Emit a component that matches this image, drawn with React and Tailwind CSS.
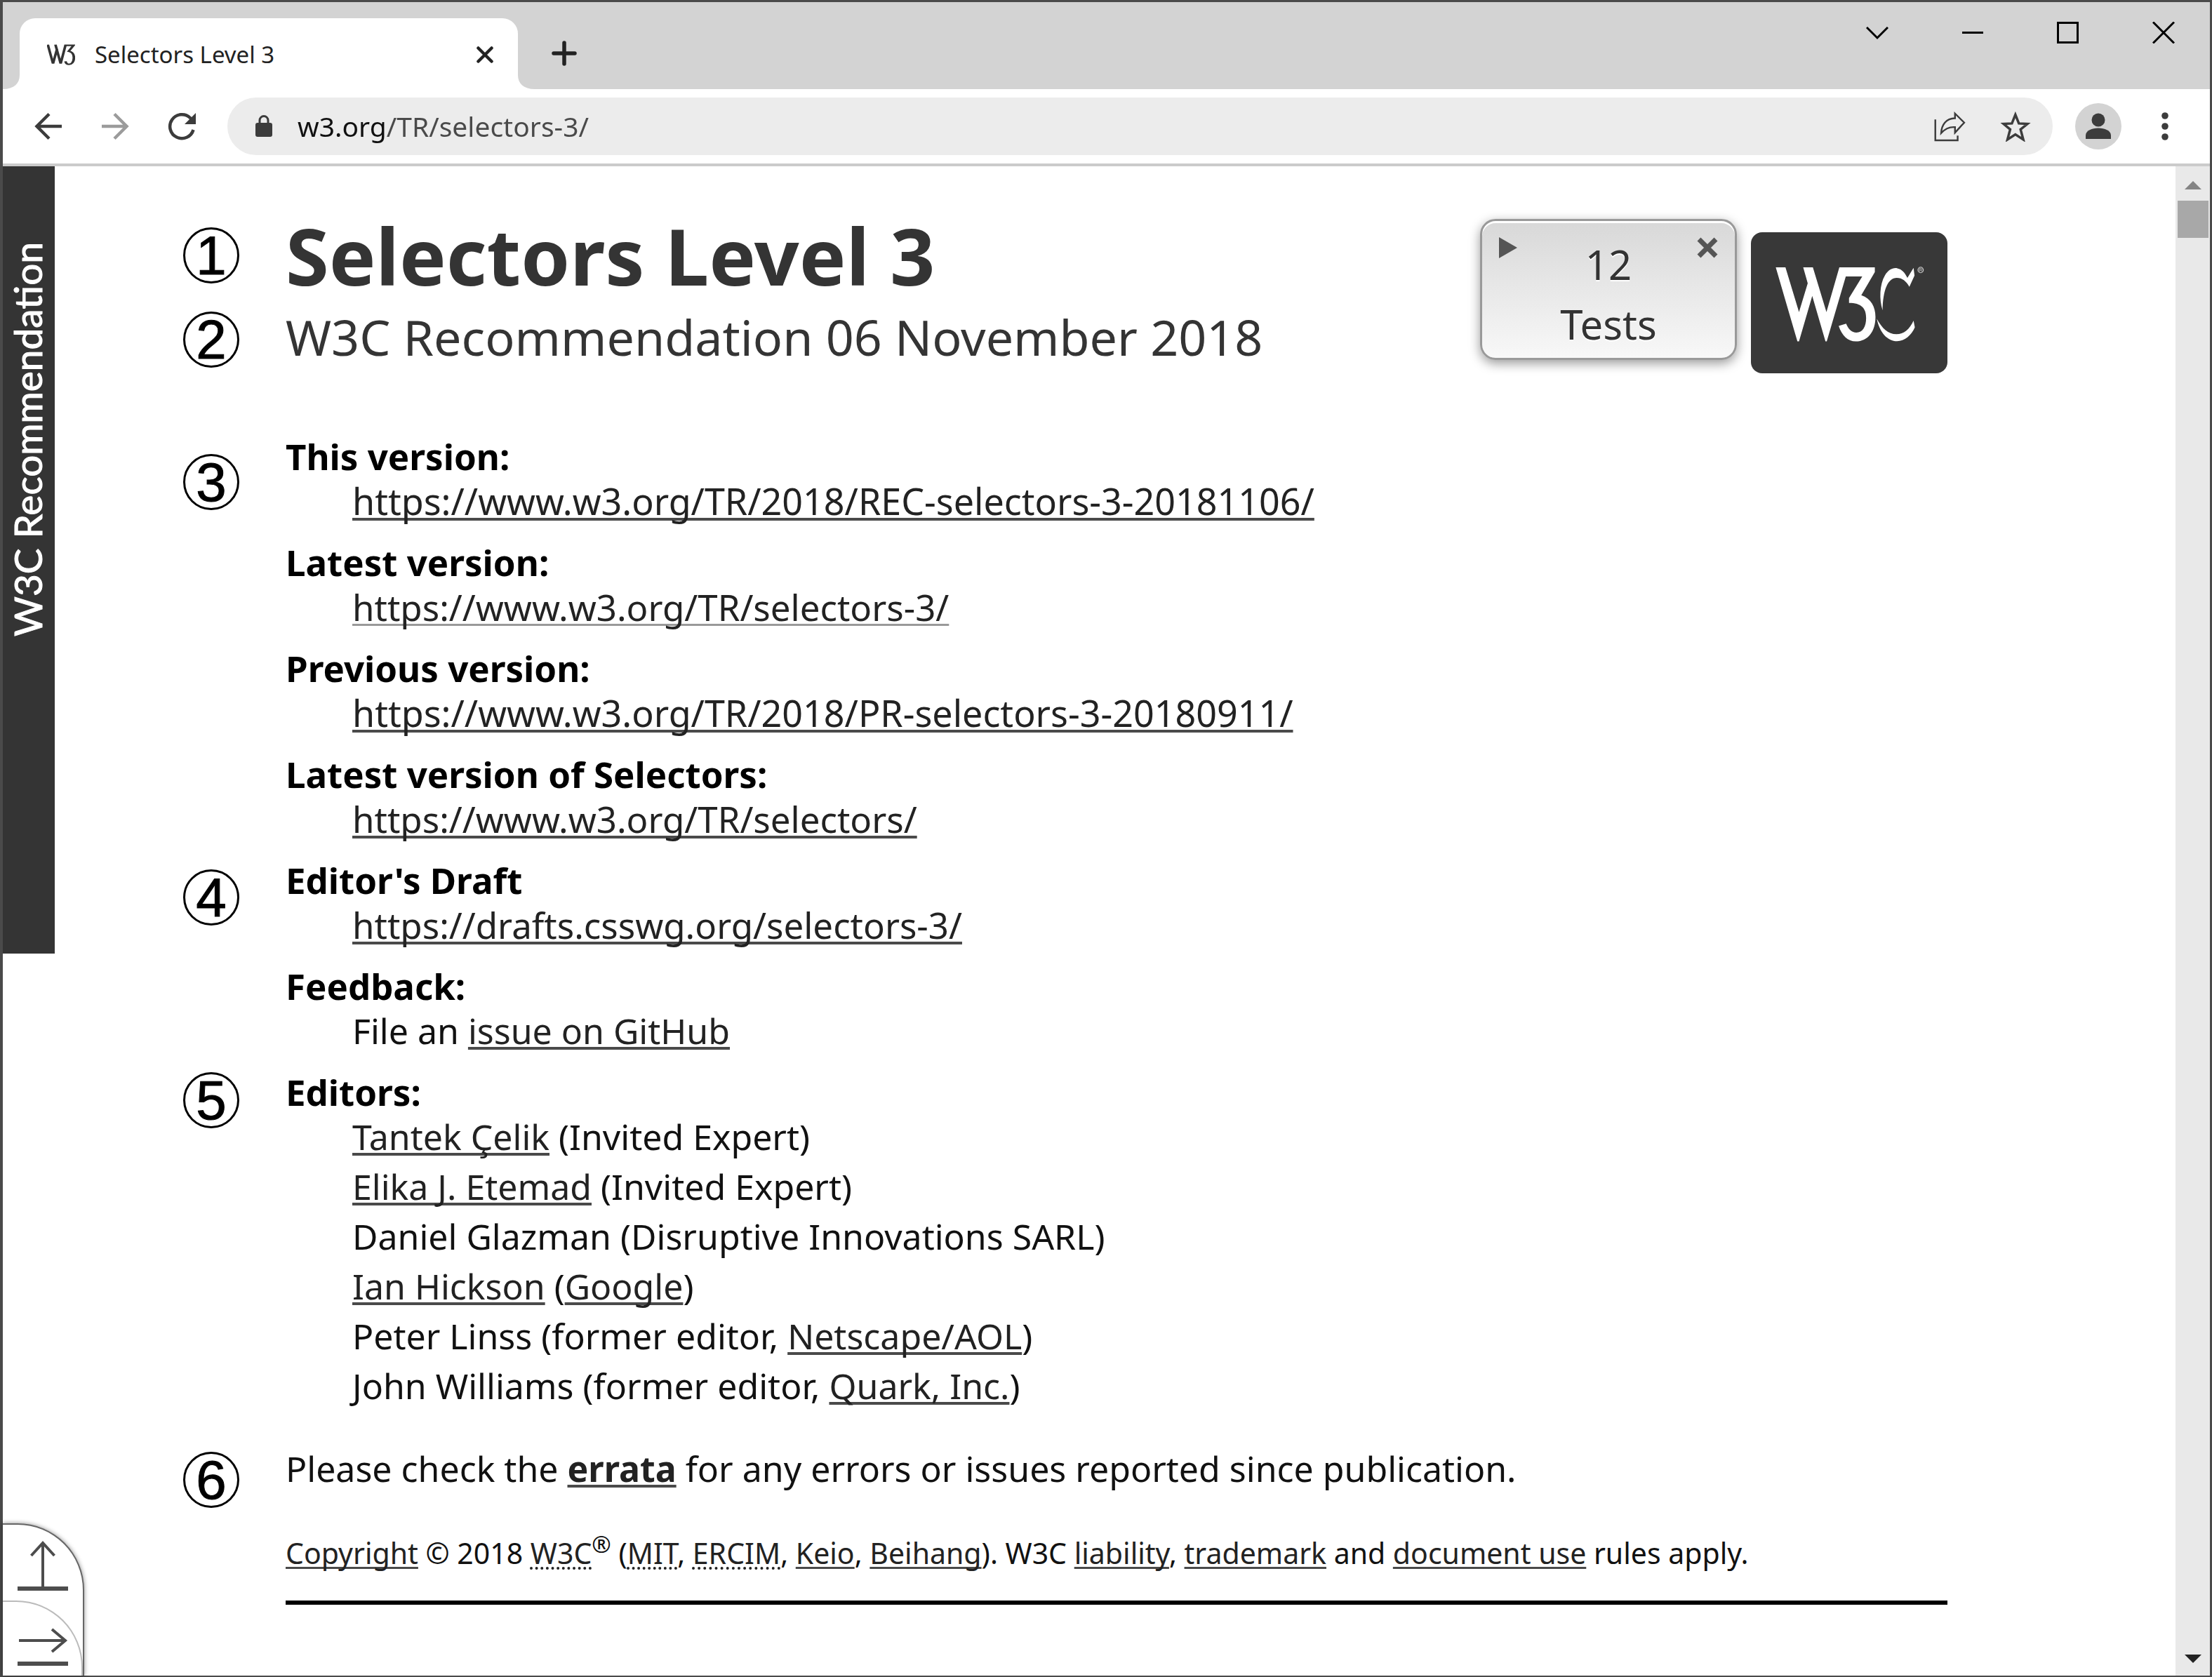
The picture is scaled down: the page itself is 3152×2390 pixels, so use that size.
import React from "react";

const linkClass =
  "text-[#222] underline decoration-[#4a4a4a] decoration-4 underline-offset-[4px] [text-decoration-skip-ink:none]";
const paleLinkClass =
  "text-[#222] underline decoration-[#999] decoration-3 underline-offset-[4px] [text-decoration-skip-ink:none]";
const smallLinkClass =
  "text-[#222] underline decoration-[#4a4a4a] decoration-3 underline-offset-[4px] [text-decoration-skip-ink:none]";
const abbrLinkClass =
  "text-[#222] underline decoration-[#222] decoration-dotted decoration-4 underline-offset-[4px] [text-decoration-skip-ink:none]";

function Link({ className = linkClass, children }) {
  return (
    <a href="#" className={className}>
      {children}
    </a>
  );
}

function Badge({ children }) {
  return (
    <span className="flex size-20 items-center justify-center rounded-full border-3 border-black font-['Liberation_Sans',sans-serif] text-[78px] leading-none text-black [-webkit-text-stroke:1px_black]">
      {children}
    </span>
  );
}

function Row({ badge, gutter = "", className = "", children }) {
  return (
    <div className={`flex ${className}`}>
      <div className={`h-0 w-[146px] shrink-0 ${gutter}`}>{badge && <Badge>{badge}</Badge>}</div>
      <div className="min-w-0 flex-1">{children}</div>
    </div>
  );
}

function Entry({ badge, gutter, term, size = "text-[50px]", children }) {
  return (
    <Row badge={badge} gutter={gutter}>
      <dl>
        <dt className="text-[51px] leading-[64px] font-bold text-black">{term}</dt>
        <dd className={`flex flex-col gap-[7px] pl-[95px] leading-[64px] ${size}`}>{children}</dd>
      </dl>
    </Row>
  );
}

function TabStrip() {
  return (
    <header className="flex h-[124px] items-end justify-between bg-[#d3d3d3]">
      <div className="flex h-[101px] items-end">
        <svg className="h-5 w-6" viewBox="0 0 24 20" preserveAspectRatio="none" aria-hidden="true">
          <path d="M0 20C16 20 24 12 24 0V20Z" fill="#fff" />
        </svg>
        <div className="flex h-full w-[710px] items-center rounded-t-[22px] bg-white pt-0.5 pr-[35px] pl-[39px]">
          <svg className="h-[30px] w-10" viewBox="117 185 70 90" preserveAspectRatio="none" aria-hidden="true">
            <path
              d="M119 187L132 268L142 205M138 187L151 268L163 190H183L171 215C181 218 184 228 184 243C184 262 178 271 172 271C167 271 164 266 163 258"
              fill="none"
              stroke="#333"
              strokeWidth="6.5"
            />
          </svg>
          <span className="ml-7 flex-1 text-[33px] leading-10 text-[#222]">Selectors Level 3</span>
          <button type="button" aria-label="Close tab">
            <svg className="size-6" viewBox="0 0 24 24" stroke="#222" strokeWidth="4.5" strokeLinecap="round">
              <path d="M2.5 2.5L21.5 21.5M21.5 2.5L2.5 21.5" />
            </svg>
          </button>
        </div>
        <svg className="h-5 w-6" viewBox="0 0 24 20" preserveAspectRatio="none" aria-hidden="true">
          <path d="M24 20C8 20 0 12 0 0V20Z" fill="#fff" />
        </svg>
        <button type="button" aria-label="New tab" className="ml-6 self-center pb-0.5">
          <svg className="size-9" viewBox="0 0 36 36" stroke="#222" strokeWidth="5.5" strokeLinecap="round">
            <path d="M18 3V33M3 18H33" />
          </svg>
        </button>
      </div>
      <div className="flex gap-[104px] self-start pt-7 pr-[50px]">
        <button type="button" aria-label="Search tabs">
          <svg className="h-[31px] w-8" viewBox="0 0 32 31" fill="none" stroke="#000" strokeWidth="3">
            <path d="M1 8L16 23L31 8" />
          </svg>
        </button>
        <button type="button" aria-label="Minimize">
          <svg className="h-[31px] w-8" viewBox="0 0 32 31" stroke="#000" strokeWidth="3">
            <path d="M1 15.5H31" />
          </svg>
        </button>
        <button type="button" aria-label="Maximize">
          <svg className="h-[31px] w-8" viewBox="0 0 32 31" fill="none" stroke="#000" strokeWidth="3">
            <path d="M1.5 1.5H29.5V29.5H1.5Z" />
          </svg>
        </button>
        <button type="button" aria-label="Close window">
          <svg className="h-[31px] w-8" viewBox="0 0 32 31" fill="none" stroke="#000" strokeWidth="3">
            <path d="M1 0.5L31 30.5M31 0.5L1 30.5" />
          </svg>
        </button>
      </div>
    </header>
  );
}

function Toolbar() {
  return (
    <nav className="flex h-[110px] items-center border-b-4 border-[#cbcbcb] bg-white pr-[59px] pl-[45px]">
      <button type="button" aria-label="Back">
        <svg className="size-10" viewBox="0 0 40 40" fill="none" stroke="#3c3c3c" strokeWidth="4.5">
          <path d="M39 20H4M21 2.5L3.5 20L21 37.5" />
        </svg>
      </button>
      <button type="button" aria-label="Forward" className="ml-[55px]">
        <svg className="size-10" viewBox="0 0 40 40" fill="none" stroke="#9b9b9b" strokeWidth="4.5">
          <path d="M1 20H36M19 2.5L36.5 20L19 37.5" />
        </svg>
      </button>
      <button type="button" aria-label="Reload" className="ml-[54px]">
        <svg className="size-[42px]" viewBox="0 0 42 42" fill="none" stroke="#3c3c3c" strokeWidth="4.5">
          <path d="M37.5 26A17 17 0 1 1 33 9L36 12" />
          <path d="M41 2V18H25Z" fill="#3c3c3c" stroke="none" />
        </svg>
      </button>
      <div className="ml-11 flex h-[82px] flex-1 items-center rounded-full bg-[#ececec] pr-[31px] pl-10">
        <svg className="h-8 w-6" viewBox="0 0 24 32" aria-hidden="true">
          <rect y="11" width="24" height="20" rx="3" fill="#3c3c3c" />
          <path d="M6 12V7.5A6 6 0 0 1 18 7.5V12" fill="none" stroke="#3c3c3c" strokeWidth="3" />
        </svg>
        <input
          type="text"
          aria-label="Address"
          defaultValue="w3.org/TR/selectors-3/"
          className="ml-9 h-16 min-w-0 flex-1 bg-linear-to-r from-[#111] from-[124px] to-[#4a4a4a] to-[124px] bg-clip-text text-[39px] leading-[64px] text-transparent outline-none"
        />
        <button type="button" aria-label="Share this page">
          <svg className="h-[43px] w-[45px]" viewBox="444 480 130 126" preserveAspectRatio="none" fill="none" stroke="#3c3c3c" strokeWidth="7">
            <path d="M449 513V600H541V580" />
            <path d="M530 488L568 526L530 568V545C505 543 488 553 473 570C475 535 493 509 530 508Z" />
          </svg>
        </button>
        <button type="button" aria-label="Bookmark this page" className="ml-[49px]">
          <svg className="h-[43px] w-11" viewBox="711 477 125 125" preserveAspectRatio="none" fill="none" stroke="#3c3c3c" strokeWidth="10">
            <path d="M773 490L787 526L822 528L794 551L805 593L773 572L741 593L752 551L725 528L759 526Z" />
          </svg>
        </button>
      </div>
      <button type="button" aria-label="Profile" className="ml-8">
        <svg className="size-[66px]" viewBox="0 0 66 66">
          <circle cx="33" cy="33" r="33" fill="#d3d3d3" />
          <circle cx="33" cy="24" r="9.5" fill="#3c3c3c" />
          <path d="M15 51V46C15 39 24 35.5 33 35.5S51 39 51 46V51Z" fill="#3c3c3c" />
        </svg>
      </button>
      <button type="button" aria-label="Menu" className="ml-[57px]">
        <svg className="h-10 w-2.5" viewBox="0 0 10 40" fill="#3c3c3c">
          <circle cx="5" cy="5" r="4.8" />
          <circle cx="5" cy="20" r="4.8" />
          <circle cx="5" cy="35" r="4.8" />
        </svg>
      </button>
    </nav>
  );
}

function TestsBox() {
  return (
    <div className="relative h-[201px] w-[366px] rounded-[22px] border-3 border-[#999] bg-linear-to-b from-[#d8d8d8] to-[#f8f8f8] pt-[19px] text-center text-[58px] leading-[85px] text-[#333] shadow-[inset_0_3px_0_#fff,0_5px_16px_rgba(0,0,0,0.4)] [text-shadow:0_2px_0_#fff]">
      <button type="button" aria-label="Expand tests" className="absolute top-[23px] left-6">
        <svg className="block h-[30px] w-[26px]" viewBox="0 0 26 30">
          <path d="M0 0L26 15L0 30Z" fill="#555" />
        </svg>
      </button>
      <p>12</p>
      <p>Tests</p>
      <button type="button" aria-label="Hide tests" className="absolute top-[23px] right-6">
        <svg className="block size-[30px]" viewBox="0 0 30 30" stroke="#555" strokeWidth="7">
          <path d="M3 3L27 27M27 3L3 27" />
        </svg>
      </button>
    </div>
  );
}

function W3CLogo() {
  return (
    <a href="#" aria-label="W3C" className="block h-[201px] w-[280px] overflow-hidden rounded-[16px] bg-[#383838]">
      <svg className="block size-full" viewBox="904 122 609 602" preserveAspectRatio="none" fill="#fff" aria-hidden="true">
        <path d="M981 272H1011L1053 463L1080 340L1066 272H1096L1138 463L1178 272H1288V292L1246 391C1276 405 1290 441 1290 483C1290 545 1267 588 1229 588C1204 588 1186 563 1176 522L1199 512C1206 536 1216 550 1231 550C1250 550 1261 525 1261 488C1261 446 1246 424 1208 424V403L1249 311H1198L1139 588H1135L1094 394L1053 588H1048Z" />
        <path d="M1408 274L1411 307L1395 355C1385 331 1373 317 1356 317C1328 317 1313 370 1312 455C1301 408 1303 345 1319 307C1330 281 1345 272 1358 276C1372 280 1381 294 1389 317Z" />
        <path d="M1294 491C1311 533 1329 557 1355 557C1378 557 1396 535 1408 499L1412 528C1401 563 1380 587 1357 587C1327 587 1303 550 1294 491Z" />
        <ellipse cx="1430" cy="283" rx="8" ry="12" fill="none" stroke="#ccc" strokeWidth="3" />
        <path d="M1427 291V276H1431C1435 276 1435 283 1431 283H1427M1431 283L1434 291" fill="none" stroke="#ccc" strokeWidth="2" />
      </svg>
    </a>
  );
}

function CornerNav() {
  return (
    <div className="absolute bottom-0 left-0 h-[217px] w-[116px] rounded-tr-[95px] border-t-2 border-r-2 border-[#666] bg-white shadow-[0_0_6px_rgba(0,0,0,0.45)]">
      <a href="#" aria-label="Jump to top" className="block h-[108px] pt-[22px] pl-[21px]">
        <svg className="h-[72px] w-[72px]" viewBox="0 0 72 72" fill="none" stroke="#4d4d4d">
          <path d="M36 66V4M19.5 22L36 4L52.5 22" strokeWidth="4" />
          <path d="M0 69H72" strokeWidth="6" />
        </svg>
      </a>
      <a
        href="#"
        aria-label="Toggle sidebar"
        className="block h-[107px] rounded-tr-[95px] border-t-2 border-r-2 border-[#bbb] pt-[37px] pl-[21px]"
      >
        <svg className="h-[56px] w-[72px]" viewBox="0 0 72 56" fill="none" stroke="#4d4d4d">
          <path d="M2 18H68M49 2L68 18L49 34" strokeWidth="4" />
          <path d="M0 51H72" strokeWidth="6" />
        </svg>
      </a>
    </div>
  );
}

function Scrollbar() {
  return (
    <div className="flex w-[49px] shrink-0 flex-col items-center bg-[#e9e9e9]">
      <button type="button" aria-label="Scroll up" className="flex h-[49px] items-center pt-1">
        <svg className="h-3 w-6" viewBox="0 0 24 12" fill="#848484">
          <path d="M0 12L12 0L24 12Z" />
        </svg>
      </button>
      <div className="h-[53px] w-11 bg-[#a8a8a8]" />
      <button type="button" aria-label="Scroll down" className="mt-auto flex h-[49px] items-center">
        <svg className="h-3 w-6" viewBox="0 0 24 12" fill="#222">
          <path d="M0 0L12 12L24 0Z" />
        </svg>
      </button>
    </div>
  );
}

function Document() {
  return (
    <main className="min-w-0 flex-1 pt-[67px] pr-[325px] pl-[183px] text-[50px] leading-[64px] text-[#111]">
      <div className="flex h-[314px] justify-between">
        <div className="flex-1">
          <Row badge="1" gutter="pt-5">
            <h1 className="text-[112px] leading-[120px] font-bold text-[#343434]">Selectors Level 3</h1>
          </Row>
          <Row badge="2" gutter="pt-5">
            <h2 className="pt-3.5 text-[70px] leading-[84px] text-[#343434]">W3C Recommendation 06 November 2018</h2>
          </Row>
        </div>
        <div className="flex gap-5">
          <div className="pt-2">
            <TestsBox />
          </div>
          <div className="pt-[27px]">
            <W3CLogo />
          </div>
        </div>
      </div>

      <div className="flex flex-col gap-[23px]">
        <Entry badge="3" gutter="pt-[29px]" term="This version:" size="text-[52px]">
          <p>
            <Link>https://www.w3.org/TR/2018/REC-selectors-3-20181106/</Link>
          </p>
        </Entry>
        <Entry term="Latest version:" size="text-[51px]">
          <p>
            <Link className={paleLinkClass}>https://www.w3.org/TR/selectors-3/</Link>
          </p>
        </Entry>
        <Entry term="Previous version:" size="text-[52px]">
          <p>
            <Link>https://www.w3.org/TR/2018/PR-selectors-3-20180911/</Link>
          </p>
        </Entry>
        <Entry term="Latest version of Selectors:" size="text-[51px]">
          <p>
            <Link>https://www.w3.org/TR/selectors/</Link>
          </p>
        </Entry>
        <Entry badge="4" gutter="pt-[17px]" term="Editor's Draft" size="text-[51px]">
          <p>
            <Link>https://drafts.csswg.org/selectors-3/</Link>
          </p>
        </Entry>
        <Entry term="Feedback:">
          <p>
            File an <Link>issue on GitHub</Link>
          </p>
        </Entry>
        <Entry badge="5" gutter="pt-1" term="Editors:">
          <p>
            <Link>Tantek Çelik</Link> (Invited Expert)
          </p>
          <p>
            <Link>Elika J. Etemad</Link> (Invited Expert)
          </p>
          <p>Daniel Glazman (Disruptive Innovations SARL)</p>
          <p>
            <Link>Ian Hickson</Link> (<Link>Google</Link>)
          </p>
          <p>
            Peter Linss (former editor, <Link>Netscape/AOL</Link>)
          </p>
          <p>
            John Williams (former editor, <Link>Quark, Inc.</Link>)
          </p>
        </Entry>
      </div>

      <Row badge="6" gutter="pt-2" className="pt-[54px]">
        <p>
          Please check the{" "}
          <strong>
            <Link>errata</Link>
          </strong>{" "}
          for any errors or issues reported since publication.
        </p>
      </Row>

      <Row className="pt-14">
        <p className="text-[41px] leading-[64px]">
          <Link className={smallLinkClass}>Copyright</Link> © 2018 <Link className={abbrLinkClass}>W3C</Link>
          <sup className="text-[33px]">®</sup> (<Link className={abbrLinkClass}>MIT</Link>,{" "}
          <Link className={abbrLinkClass}>ERCIM</Link>, <Link className={smallLinkClass}>Keio</Link>,{" "}
          <Link className={smallLinkClass}>Beihang</Link>). W3C <Link className={smallLinkClass}>liability</Link>,{" "}
          <Link className={smallLinkClass}>trademark</Link> and <Link className={smallLinkClass}>document use</Link>{" "}
          rules apply.
        </p>
        <hr className="mt-9 border-t-6 border-black" />
      </Row>
    </main>
  );
}

export default function App() {
  return (
    <div className="flex min-h-screen flex-col border-t-3 border-r-3 border-b-2 border-l-4 border-[#4a4a4a] bg-white font-['Noto_Sans',sans-serif]">
      <TabStrip />
      <Toolbar />
      <div className="relative flex flex-1">
        <aside className="flex h-[1122px] w-[74px] shrink-0 justify-center bg-[#343434] pt-[108px] pr-1">
          <p className="rotate-180 text-right font-['Lato',sans-serif] text-[55px] leading-[70px] whitespace-nowrap text-white [-webkit-text-stroke:1px_white] [writing-mode:vertical-rl]">
            W3C Recommendation
          </p>
        </aside>
        <Document />
        <Scrollbar />
        <CornerNav />
      </div>
    </div>
  );
}
